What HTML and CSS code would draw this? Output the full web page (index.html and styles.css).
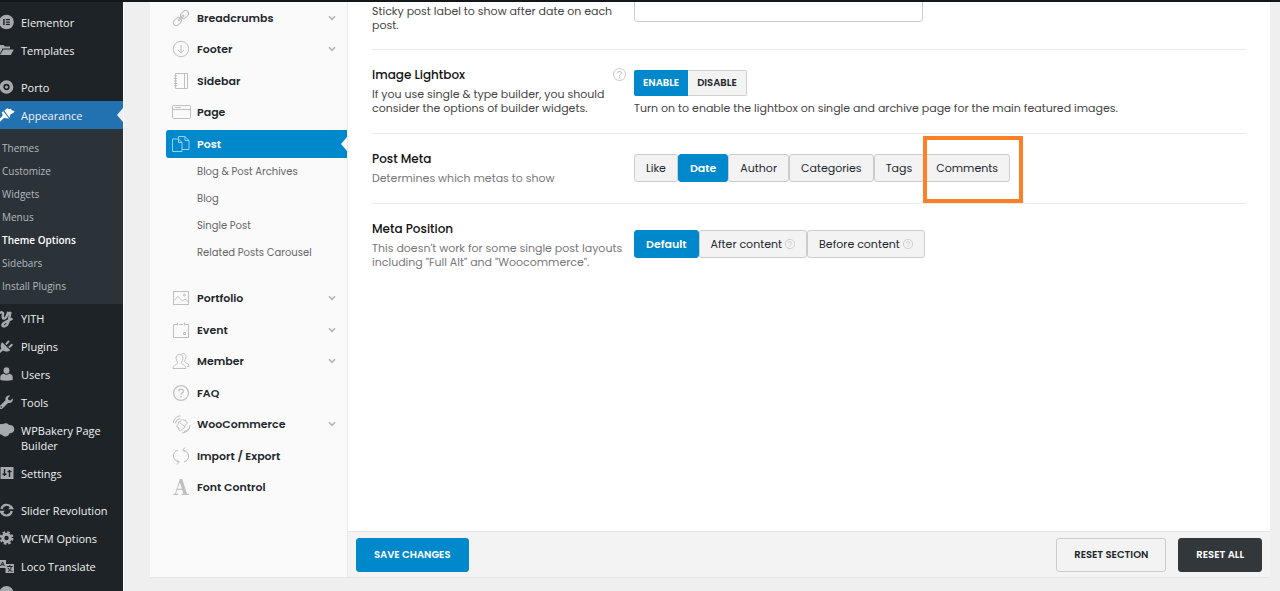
FILE: index.html
```html
<!DOCTYPE html>
<html lang="en">
<head>
<meta charset="utf-8">
<meta name="viewport" content="width=device-width, initial-scale=1">
<title>Theme Options</title>
<link rel="stylesheet" href="styles.css">
</head>
<body>
<svg class="sprite" aria-hidden="true">
  <symbol id="chevron" viewBox="0 0 8 6"><path d="M1 1.2 4 4.4 7 1.2" fill="none" stroke="currentColor" stroke-width="1.6"/></symbol>
  <symbol id="question" viewBox="0 0 16 16"><circle cx="8" cy="8" r="7.4" fill="none" stroke="currentColor" stroke-width="1.2"/><path d="M5.7 6.4C5.7 3.4 10.4 3.500 10.400 6.200 10.400 7.800 8 7.800 8 9.800M8 11v1.400" fill="none" stroke="currentColor" stroke-width="1.3"/></symbol>
</svg>
<div class="layout">
  <nav class="admin" aria-label="Admin menu">
    <ul class="admin-list">
      <li><a class="admin-link" href="#"><svg class="admin-icon" viewBox="0 0 14 14"><circle cx="6.5" cy="7" r="7.3" fill="currentColor"/><path d="M3.2 4h1.5v6H3.2zM5.9 4h4v1.3h-4zM5.9 6.4h4v1.3h-4zM5.9 8.7h4V10h-4z" fill="#1d2327"/></svg>Elementor</a></li>
      <li><a class="admin-link" href="#"><svg class="admin-icon" viewBox="0 0 14 14"><path d="M-2 11V3.4L0 2h3.5l1.4 1.6H10v2H2.600L-.3 11zM3.300 6.400H13.800L10.800 12H0z" fill="currentColor"/></svg>Templates</a></li>
      <li class="admin-gap"><a class="admin-link" href="#"><svg class="admin-icon" viewBox="0 0 14 14"><circle cx="6.500" cy="7" r="5" fill="none" stroke="currentColor" stroke-width="3.600"/><circle cx="6.500" cy="7" r="1.500" fill="currentColor"/></svg>Porto</a></li>
      <li><a class="admin-link admin-current" href="#" aria-current="true"><svg class="admin-icon" viewBox="0 0 14 14"><path d="M4.300 2.400 7.300.200 9.200 1.200 10.800.700 12 2.400l2.500.600-.700 1.500L10.500 6.500 9.500 9.800zM3.300 3.200 9 10.600 6 10.300 4 10.100-.800 14.500-2.600 12.500 2.300 8.300 2.600 6.500 1.500 4.500z" fill="currentColor"/></svg>Appearance</a>
        <ul class="admin-sub">
          <li><a href="#">Themes</a></li>
          <li><a href="#">Customize</a></li>
          <li><a href="#">Widgets</a></li>
          <li><a href="#">Menus</a></li>
          <li><a class="admin-sub-current" href="#">Theme Options</a></li>
          <li><a href="#">Sidebars</a></li>
          <li><a href="#">Install Plugins</a></li>
        </ul>
      </li>
      <li><a class="admin-link" href="#"><svg class="admin-icon" viewBox="0 0 14 14"><path d="M-.500 2.200C1.500.500 3.600 1 3 3.600 2.300 6.500 2.800 8 4.600 7.400 6.800 6.500 7.500 3.500 8.200.800M10.500.800C9.500 5 9.300 9 8 12 6.600 16 2.300 16.300 2.400 13.800 2.600 11.500 8 10 12.500 7.500" fill="none" stroke="currentColor" stroke-width="2.400"/></svg>YITH</a></li>
      <li><a class="admin-link" href="#"><svg class="admin-icon" viewBox="0 0 14 14"><path d="M2.200 3.200 10.300 11.200C8 13 5 13 3 11.600L0 14-1.500 12.600 1.300 9.600C.200 7.200.500 5 2.200 3.200zM5.200 4.700 8.200 1.200 9.700 2.400 6.700 6zM8.300 7.700 11.700 4.600 13 6 9.700 9.200z" fill="currentColor"/></svg>Plugins</a></li>
      <li><a class="admin-link" href="#"><svg class="admin-icon" viewBox="0 0 14 14"><ellipse cx="6.500" cy="3.500" rx="2.900" ry="3.200" fill="currentColor"/><path d="M.300 13V10C.300 8 2 7 4 6.700c1.500 1.300 3.500 1.300 5 0 2 .300 3.700 1.300 3.700 3.300v3c-4 1-8.500 1-12.400 0z" fill="currentColor"/></svg>Users</a></li>
      <li><a class="admin-link" href="#"><svg class="admin-icon" viewBox="0 0 14 14"><path d="M12.700 3.300 10.400 5.400 8.400 4.900 8 2.900 10.100.700C7.200.100 4.800 2 5.500 5.300L0 10.800c-2 2 .800 4.400 2.500 2.600L8.100 7.900c3.200.700 5.400-1.700 4.600-4.600z" fill="currentColor"/><circle cx="1.300" cy="12" r=".800" fill="#1d2327"/></svg>Tools</a></li>
      <li><a class="admin-link" href="#"><svg class="admin-icon" viewBox="0 0 14 14"><path d="M-2 6C-3 1.500 1 .500 2.500 1.300 4.500-.500 8-.200 9 2c3.500-.500 5.500 2 5.300 4.500-.200 2.600-2.500 4-4.800 3.700C8.500 14 4 14.600 2 11.700-.800 12-3 9-2 6z" fill="currentColor"/></svg>WPBakery Page Builder</a></li>
      <li><a class="admin-link" href="#"><svg class="admin-icon" viewBox="0 0 14 14"><path d="M.500 1h13v12H.500z" fill="currentColor"/><path d="M4.500 3v7M2.500 8.300h4M9.500 4v7M7.500 5.500h4" stroke="#1d2327" stroke-width="1.400"/></svg>Settings</a></li>
      <li class="admin-gap"><a class="admin-link" href="#"><svg class="admin-icon" viewBox="0 0 14 14"><path d="M1.500 6A5.200 5.200 0 0 1 11 4.200M11.700 8A5.200 5.200 0 0 1 2 9.800" fill="none" stroke="currentColor" stroke-width="2.200"/><path d="M8.200 6.300H14L11.500 2.200zM-1 7.700h5.800L1.700 11.800z" fill="currentColor"/></svg>Slider Revolution</a></li>
      <li><a class="admin-link" href="#"><svg class="admin-icon" viewBox="0 0 14 14"><circle cx="6.500" cy="7" r="3.700" fill="none" stroke="currentColor" stroke-width="3"/><circle cx="6.500" cy="7" r="5.800" fill="none" stroke="currentColor" stroke-width="2.200" stroke-dasharray="2.555 2"/></svg>WCFM Options</a></li>
      <li><a class="admin-link" href="#"><svg class="admin-icon" viewBox="0 0 14 14"><path d="M-2 1h8v8h-8zM5.500 5h8.500v9H5.500z" fill="currentColor"/><path d="M.500 7 2.500 3 4.300 7M1.300 5.800h2.200M7 7.500h5.700M9.800 6v1.500M8 12.500c2-1 3-2.500 3.200-5M8 9c1 2 2.500 3 4.500 3.500" fill="none" stroke="#1d2327"/></svg>Loco Translate</a></li>
      <li class="admin-next" aria-hidden="true"><svg class="admin-icon" viewBox="0 0 14 14"><circle cx="6.500" cy="7" r="7" fill="currentColor"/></svg></li>
    </ul>
  </nav>
  <div class="page">
    <div class="panel">
      <nav class="options" aria-label="Theme options">
        <ul class="option-list">
          <li><a class="option" href="#"><svg class="option-icon" viewBox="0 0 16 16"><g fill="none" stroke="currentColor" transform="rotate(-45 8 8)"><rect x="-1.500" y="5" width="9" height="6" rx="3"/><rect x="8.500" y="5" width="9" height="6" rx="3"/><path d="M4.500 7.200h7v1.600h-7z"/></g></svg>Breadcrumbs<svg class="chevron"><use href="#chevron"/></svg></a></li>
          <li><a class="option" href="#"><svg class="option-icon" viewBox="0 0 16 16"><g fill="none" stroke="currentColor"><circle cx="8" cy="8" r="7.700"/><path d="M8 4v8M5 9l3 3 3-3"/></g></svg>Footer<svg class="chevron"><use href="#chevron"/></svg></a></li>
          <li><a class="option" href="#"><svg class="option-icon" viewBox="0 0 16 16"><g fill="none" stroke="currentColor"><path d="M2.500.500h12v15h-12zM11.500.500v15M1 3h3M1 5.500h3M1 8h3M1 10.500h3M1 13h3"/></g></svg>Sidebar</a></li>
          <li><a class="option" href="#"><svg class="option-icon" viewBox="0 0 16 16"><g fill="none" stroke="currentColor"><rect x="-.500" y="1.500" width="18" height="13" rx="1"/><path d="M0 5.500h17M2 3.500h6"/></g></svg>Page</a></li>
          <li><a class="option option-current" href="#" aria-current="page"><svg class="option-icon" viewBox="0 0 16 16"><g fill="none" stroke="currentColor"><path d="M-.500 3H5.500L9 6.500v9H-.500zM5.500 3v3.500H9M5.500 3V.500h6.500L16 4.500V13.500H9M12 .500v4h4"/></g></svg>Post</a>
            <ul class="option-sub">
              <li><a href="#">Blog &amp; Post Archives</a></li>
              <li><a href="#">Blog</a></li>
              <li><a href="#">Single Post</a></li>
              <li><a href="#">Related Posts Carousel</a></li>
            </ul>
          </li>
          <li><a class="option" href="#"><svg class="option-icon" viewBox="0 0 16 16"><g fill="none" stroke="currentColor"><rect x=".500" y="1.500" width="15" height="13"/><path d="M.500 11 5 6.500l4.500 4.500 2.500-2 3.500 3"/><circle cx="11.500" cy="5" r="1"/></g></svg>Portfolio<svg class="chevron"><use href="#chevron"/></svg></a></li>
          <li><a class="option" href="#"><svg class="option-icon" viewBox="0 0 16 16"><g fill="none" stroke="currentColor"><path d="M4 2.500H.500v13h15v-13H12M6 2.500h4M4.500.500v3M11.500.500v3M10.500 10.500h2v2h-2z"/></g></svg>Event<svg class="chevron"><use href="#chevron"/></svg></a></li>
          <li><a class="option" href="#"><svg class="option-icon" viewBox="0 0 16 16"><g fill="none" stroke="currentColor"><path d="M6.500 1.500C9 1.500 10.200 3.300 9.900 5.800 9.700 7.500 8.700 8.300 8.500 9.500 8.300 12 13 11.500 13 15.500H0C0 11.500 4.700 12 4.500 9.500 4.300 8.300 3.300 7.500 3.100 5.800 2.800 3.300 4 1.500 6.500 1.500zM8.500 1C10.500-.300 13.300 1 13 4.300 12.800 6 11.800 6.800 11.600 8 11.500 10.500 16 9.500 16 13.500H14"/></g></svg>Member<svg class="chevron"><use href="#chevron"/></svg></a></li>
          <li><a class="option" href="#"><svg class="option-icon"><use href="#question"/></svg>FAQ</a></li>
          <li><a class="option" href="#"><svg class="option-icon" viewBox="0 0 16 16"><g fill="none" stroke="currentColor"><path d="M.300 7A7.500 7.500 0 0 1 7.500-.200M2.300 7.500a6 6 0 0 1 5-5M17 9a8 8 0 0 1-8 8M15.500 12.500a6 6 0 0 1-4.500 3"/><path d="m3.500 10 2-2-.500-1.500 1.500-.500 3-3 1.500 1.500 1.500-.500.500 1.500 1.500 1.500-3 3 .500 1.500-1.500.500-3 3L5.500 13.500l.500-1.500-1.500-.500zM6.500 6.500l5 4"/></g></svg>WooCommerce<svg class="chevron"><use href="#chevron"/></svg></a></li>
          <li><a class="option" href="#"><svg class="option-icon" viewBox="0 0 16 16"><g fill="none" stroke="currentColor"><path d="M6 14C-1.200 12.500-1.200 4 5 2M10 2c7.200 1.500 7.200 10 1 12M4 11.500 6.300 14 4 16.500M12-.500 9.700 2 12 4.500"/></g></svg>Import / Export</a></li>
          <li><a class="option" href="#"><svg class="option-icon" viewBox="0 0 16 16"><path d="M6.800 0h2.400L14 14.800h1.800V16H8.500v-1.200h1.800L9.300 11H4.100L3 14.800H5.300V16H.200v-1.200H2zM4.500 9.800h4.400L6.800 3.500z" fill="currentColor" fill-rule="evenodd"/></svg>Font Control</a></li>
        </ul>
      </nav>
      <form class="editor">
        <div class="fields">
          <div class="field field-scrolled">
            <div class="field-label"><label class="hint hint-dark" for="sticky-label">Sticky post label to show after date on each post.</label></div>
            <div class="field-control"><input class="text-input" id="sticky-label" type="text"></div>
          </div>
          <div class="field">
            <div class="field-label">
              <div class="field-head"><h3 class="field-title">Image Lightbox</h3><svg class="help" viewBox="0 0 16 16"><use href="#question"/></svg></div>
              <p class="hint hint-dark">If you use single &amp; type builder, you should consider the options of builder widgets.</p>
            </div>
            <div class="field-control">
              <div class="switch"><button type="button" class="switch-button switch-on" aria-pressed="true">ENABLE</button><button type="button" class="switch-button" aria-pressed="false">DISABLE</button></div>
              <p class="note">Turn on to enable the lightbox on single and archive page for the main featured images.</p>
            </div>
          </div>
          <div class="field">
            <div class="field-label">
              <h3 class="field-title">Post Meta</h3>
              <p class="hint">Determines which metas to show</p>
            </div>
            <div class="field-control">
              <div class="choices">
                <button type="button" class="choice">Like</button><button type="button" class="choice choice-on" aria-pressed="true">Date</button><button type="button" class="choice">Author</button><button type="button" class="choice">Categories</button><button type="button" class="choice">Tags</button><div class="marked"><button type="button" class="choice">Comments</button></div>
              </div>
            </div>
          </div>
          <div class="field">
            <div class="field-label">
              <h3 class="field-title">Meta Position</h3>
              <p class="hint">This doesn't work for some single post layouts including "Full Alt" and "Woocommerce".</p>
            </div>
            <div class="field-control field-control-low">
              <div class="choices">
                <button type="button" class="choice choice-on" aria-pressed="true">Default</button><button type="button" class="choice">After content<svg class="choice-help" viewBox="0 0 16 16"><use href="#question"/></svg></button><button type="button" class="choice">Before content<svg class="choice-help" viewBox="0 0 16 16"><use href="#question"/></svg></button>
              </div>
            </div>
          </div>
        </div>
        <div class="actions">
          <button type="button" class="action action-save">SAVE CHANGES</button>
          <div class="action-group">
            <button type="button" class="action action-section">RESET SECTION</button>
            <button type="button" class="action action-all">RESET ALL</button>
          </div>
        </div>
      </form>
    </div>
  </div>
</div>
</body>
</html>
```
FILE: styles.css
```css
* { box-sizing: border-box; }
body {
  margin: 0;
  height: 100vh;
  overflow: hidden;
  border-top: 2px solid #14171a;
  background: #efefef;
  color: #23282d;
  font: 12px/14px Poppins, Inter, sans-serif;
}
ul { margin: 0; padding: 0; list-style: none; }
h3, p { margin: 0; }
a { color: inherit; text-decoration: none; }
button, input { font: inherit; color: inherit; }
button { cursor: pointer; white-space: nowrap; }
svg { overflow: visible; flex: none; }
.sprite { position: absolute; width: 0; height: 0; }

.layout { display: flex; height: 100%; }

/* Admin menu */
.admin {
  flex: 0 0 124px;
  padding-top: 6px;
  overflow: hidden;
  border-right: 1px solid #fafafa;
  background: #1d2327;
  color: #f0f0f1;
  font: 11px/15px "Segoe UI", "Open Sans", sans-serif;
}
.admin-link { display: flex; position: relative; min-height: 28px; padding: 7px 8px 6px 0; }
.admin-icon { width: 14px; height: 14px; margin-right: 7px; color: #a7aaad; }
.admin-gap { margin-top: 9px; }
.admin-next { padding-top: 6px; }
.admin-current { background: #2271b1; }
.admin-current .admin-icon { color: #fff; }
.admin-current::after {
  content: "";
  position: absolute;
  top: 7px;
  right: 0;
  border: 7px solid transparent;
  border-left: 0;
  border-right: 6px solid #efefef;
}
.admin-sub {
  padding: 8px 0 6px 2px;
  background: #2c3338;
  color: #b4b9be;
  font-size: 10px;
  line-height: 23px;
}
.admin-sub-current { color: #fff; font-weight: 600; }

/* Panel */
.page { display: flex; flex: 1; min-width: 0; padding: 0 10px 13px 26px; }
.panel { display: flex; flex: 1; min-width: 0; overflow: hidden; border-bottom: 1px solid #e5e5e5; background: #fff; }
.options {
  flex: 0 0 198px;
  padding: 2px 0 0 16px;
  border-right: 1px solid #eaeaea;
  background: #fafafa;
}
.option-list > li { margin-bottom: 3px; }
.option-list > li:nth-child(even) { margin-bottom: 4px; }
.option {
  display: flex;
  position: relative;
  align-items: center;
  height: 28px;
  padding: 0 11px 0 7px;
  border-radius: 3px 0 0 3px;
  font-size: 11px;
  font-weight: 600;
}
.option-icon { width: 16px; height: 16px; margin-right: 8px; color: #c0c0c0; }
.chevron { width: 8px; height: 6px; margin-left: auto; color: #b4b4b4; }
.option-current { background: #0088cc; color: #fff; }
.option-current .option-icon { color: #9bd0ec; }
.option-current::after {
  content: "";
  position: absolute;
  top: 7px;
  right: 0;
  border: 7px solid transparent;
  border-left: 0;
  border-right: 6px solid #fff;
}
.option-sub { padding: 0 0 15px 31px; color: #666; font-size: 10px; line-height: 27px; }

/* Fields */
.editor { display: flex; flex: 1; flex-direction: column; min-width: 0; }
.fields { flex: 1; min-height: 0; padding: 0 24px; }
.field { display: flex; padding: 16px 0 18px; border-bottom: 1px solid #eaeaea; }
.field:last-child { border-bottom: 0; }
.field-scrolled { height: 48px; padding: 2px 0 0; }
.field-label { flex: 0 0 262px; padding-right: 8px; }
.field-head { display: flex; justify-content: space-between; }
.field-title { margin-bottom: 3px; font-size: 12px; font-weight: 500; line-height: 18px; color: #111; }
.help { width: 13px; height: 13px; margin-top: 2px; color: #c8c8c8; }
.hint { display: block; color: #777; font-size: 11px; }
.hint-dark { color: #444; }
.field-control { flex: 1; min-width: 0; padding-top: 4px; }
.field-control-low { padding-top: 10px; }
.text-input {
  display: block;
  width: 289px;
  height: 34px;
  margin-top: -20px;
  border: 1px solid #ccc;
  border-radius: 3px;
  background: #fff;
}
.note { margin-top: 5px; color: #444; font-size: 11px; }

.switch { display: flex; }
.switch-button {
  height: 26px;
  padding: 0 9px;
  border: 1px solid #d0d0d0;
  border-left: 0;
  border-radius: 0 2px 2px 0;
  background: #f3f3f3;
  font-size: 10px;
  font-weight: 600;
}
.switch-on { border: 0; border-radius: 2px 0 0 2px; background: #0088cc; color: #fff; }
.choices { display: flex; }
.choice {
  display: flex;
  align-items: center;
  height: 28px;
  padding: 0 11px;
  border: 1px solid #ccc;
  border-radius: 3px;
  background: #f3f3f3;
  font-size: 11px;
  font-weight: 400;
}
.choice-on { border-color: #0088cc; background: #0088cc; color: #fff; font-weight: 600; }
.choice-help { width: 10px; height: 10px; margin-left: 3px; color: #c4c4c4; }
.marked { position: relative; }
.marked::after {
  content: "";
  position: absolute;
  inset: -18px -13px -21px -1px;
  border: 4px solid #ff7f27;
  pointer-events: none;
}

/* Footer actions */
.actions {
  display: flex;
  justify-content: space-between;
  padding: 6px 8px 5px;
  border-top: 1px solid #e5e5e5;
  background: #f3f3f3;
}
.action-group { display: flex; gap: 12px; }
.action {
  height: 34px;
  padding: 0 17px;
  border: 1px solid #ccc;
  border-radius: 3px;
  background: #f3f3f3;
  font-size: 10px;
  font-weight: 600;
}
.action-save { border-color: #0088cc; background: #0088cc; color: #fff; }
.action-all { border-color: #32373c; background: #32373c; color: #fff; }
```
